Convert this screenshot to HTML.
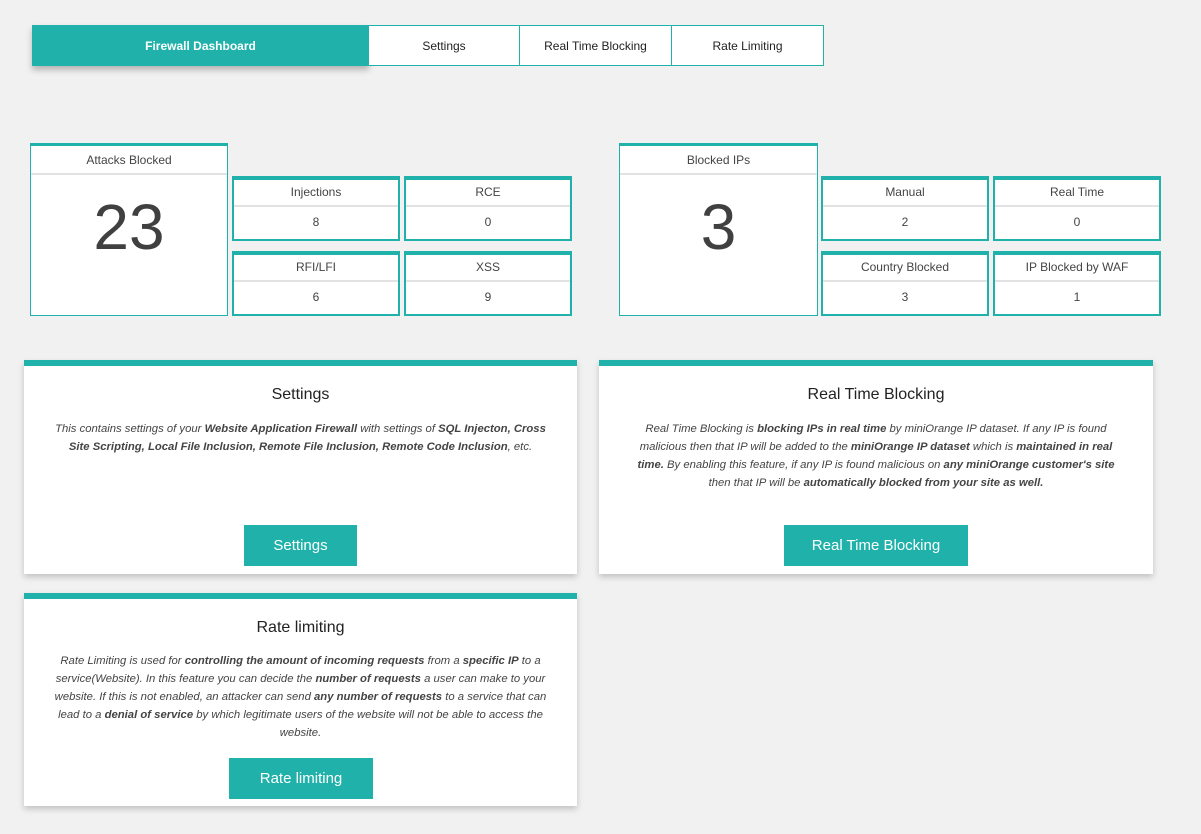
<!DOCTYPE html>
<html><head><meta charset="utf-8"><style>
*{box-sizing:border-box;margin:0;padding:0}
body{width:1201px;height:834px;background:#f1f1f1;font-family:"Liberation Sans",sans-serif;color:#444;position:relative;overflow:hidden}
.a{position:absolute}
.tab{position:absolute;top:25px;height:41px;background:#fff;border:1px solid #20b2aa;font-size:12px;color:#222;display:flex;align-items:center;justify-content:center}
.tab.on{background:#20b2aa;color:#fff;font-weight:bold;border:none;box-shadow:0 4px 6px rgba(0,0,0,.25)}
.big{position:absolute;background:#fff;border:1px solid #20b2aa;border-top:3px solid #20b2aa}
.big .h{height:29px;border-bottom:2px solid #e2e2e2;font-size:12px;text-align:center;line-height:28px;color:#444}
.big .n{text-align:center;font-size:64px;color:#404040;line-height:1;margin-top:20px}
.sm{position:absolute;width:168px;height:65px;background:#fff;border:2px solid #20b2aa;border-top:4px solid #20b2aa}
.sm .h{height:27px;border-bottom:2px solid #e2e2e2;font-size:12px;text-align:center;line-height:24px}
.sm .v{font-size:12px;text-align:center;line-height:30px}
.card{position:absolute;background:#fff;border-top:6px solid #20b2aa;box-shadow:0 3px 6px rgba(0,0,0,.2);text-align:center}
.card h2{font-size:16px;font-weight:normal;color:#222;margin-top:20px}
.card p{font-size:11.3px;font-style:italic;line-height:18px;color:#444;margin:16px 18px 0}
.card b{font-weight:bold}
.btn{position:absolute;background:#20b2aa;color:#fff;font-size:15px;display:flex;align-items:center;justify-content:center;height:41px}
</style></head><body>
<div class="tab on" style="left:32px;width:337px;height:41px">Firewall Dashboard</div>
<div class="tab" style="left:368px;width:152px">Settings</div>
<div class="tab" style="left:519px;width:153px">Real Time Blocking</div>
<div class="tab" style="left:671px;width:153px">Rate Limiting</div>

<div class="big" style="left:30px;top:143px;width:198px;height:173px"><div class="h">Attacks Blocked</div><div class="n">23</div></div>
<div class="sm" style="left:232px;top:176px"><div class="h">Injections</div><div class="v">8</div></div>
<div class="sm" style="left:404px;top:176px"><div class="h">RCE</div><div class="v">0</div></div>
<div class="sm" style="left:232px;top:251px"><div class="h">RFI/LFI</div><div class="v">6</div></div>
<div class="sm" style="left:404px;top:251px"><div class="h">XSS</div><div class="v">9</div></div>

<div class="big" style="left:619px;top:143px;width:199px;height:173px"><div class="h">Blocked IPs</div><div class="n">3</div></div>
<div class="sm" style="left:821px;top:176px"><div class="h">Manual</div><div class="v">2</div></div>
<div class="sm" style="left:993px;top:176px"><div class="h">Real Time</div><div class="v">0</div></div>
<div class="sm" style="left:821px;top:251px"><div class="h">Country Blocked</div><div class="v">3</div></div>
<div class="sm" style="left:993px;top:251px"><div class="h">IP Blocked by WAF</div><div class="v">1</div></div>

<div class="card" style="left:24px;top:360px;width:553px;height:214px">
<h2>Settings</h2>
<p>This contains settings of your <b>Website Application Firewall</b> with settings of <b>SQL Injecton, Cross<br>Site Scripting, Local File Inclusion, Remote File Inclusion, Remote Code Inclusion</b>, etc.</p>
</div>
<div class="btn" style="left:244px;top:525px;width:113px">Settings</div>

<div class="card" style="left:599px;top:360px;width:554px;height:214px">
<h2>Real Time Blocking</h2>
<p>Real Time Blocking is <b>blocking IPs in real time</b> by miniOrange IP dataset. If any IP is found<br>malicious then that IP will be added to the <b>miniOrange IP dataset</b> which is <b>maintained in real<br>time.</b> By enabling this feature, if any IP is found malicious on <b>any miniOrange customer's site</b><br>then that IP will be <b>automatically blocked from your site as well.</b></p>
</div>
<div class="btn" style="left:784px;top:525px;width:184px">Real Time Blocking</div>

<div class="card" style="left:24px;top:593px;width:553px;height:213px">
<h2>Rate limiting</h2>
<p style="margin-top:15px">Rate Limiting is used for <b>controlling the amount of incoming requests</b> from a <b>specific IP</b> to a<br>service(Website). In this feature you can decide the <b>number of requests</b> a user can make to your<br>website. If this is not enabled, an attacker can send <b>any number of requests</b> to a service that can<br>lead to a <b>denial of service</b> by which legitimate users of the website will not be able to access the<br>website.</p>
</div>
<div class="btn" style="left:229px;top:758px;width:144px">Rate limiting</div>
</body></html>
